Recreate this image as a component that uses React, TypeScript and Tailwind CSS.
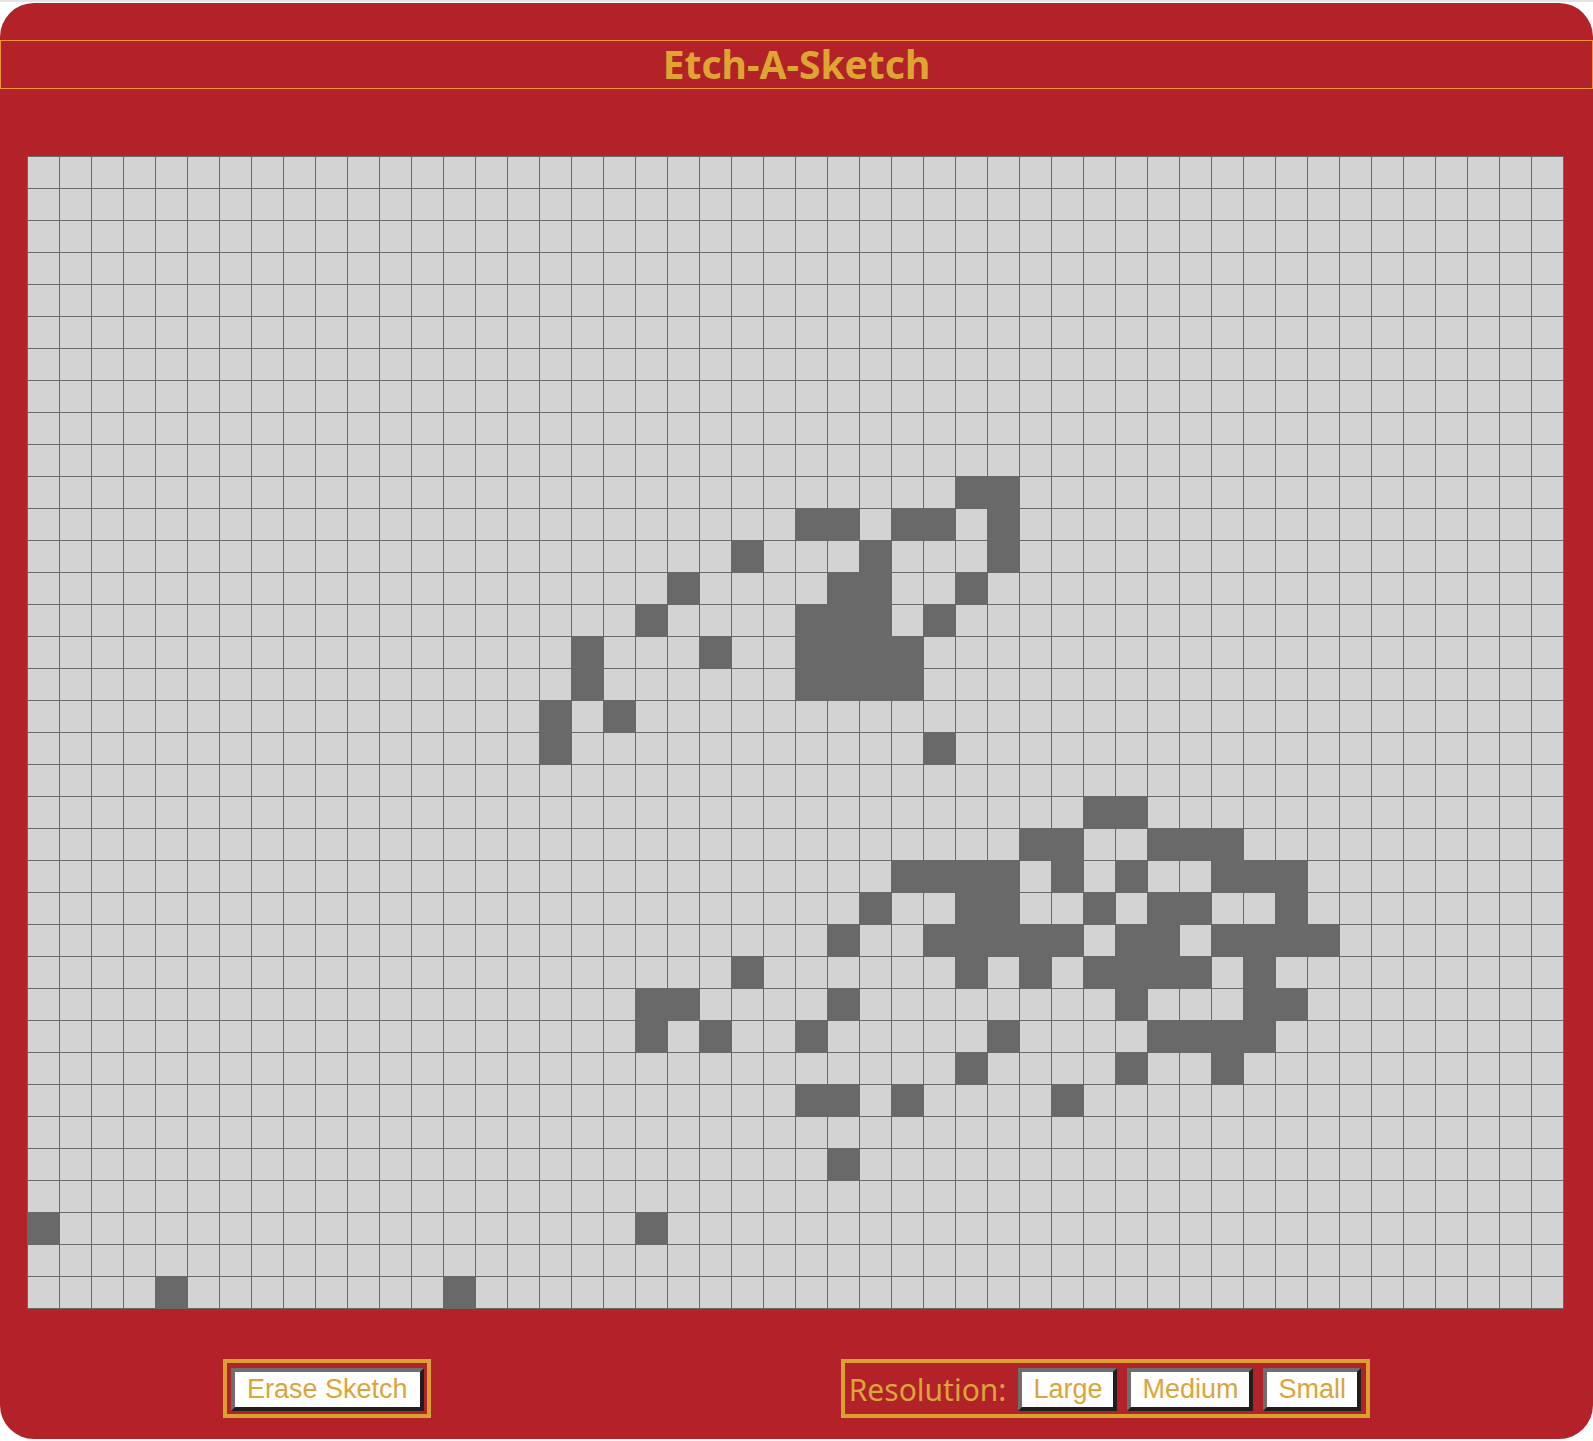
import React from "react";

const ROWS = 36;
const COLS = 48;

// cells that have been drawn on, by row
const drawn: Record<number, number[]> = {
  10: [29, 30],
  11: [24, 25, 27, 28, 30],
  12: [22, 26, 30],
  13: [20, 25, 26, 29],
  14: [19, 24, 25, 26, 28],
  15: [17, 21, 24, 25, 26, 27],
  16: [17, 24, 25, 26, 27],
  17: [16, 18],
  18: [16, 28],
  20: [33, 34],
  21: [31, 32, 35, 36, 37],
  22: [27, 28, 29, 30, 32, 34, 37, 38, 39],
  23: [26, 29, 30, 33, 35, 36, 39],
  24: [25, 28, 29, 30, 31, 32, 34, 35, 37, 38, 39, 40],
  25: [22, 29, 31, 33, 34, 35, 36, 38],
  26: [19, 20, 25, 34, 38, 39],
  27: [19, 21, 24, 30, 35, 36, 37, 38],
  28: [29, 34, 37],
  29: [24, 25, 27, 32],
  31: [25],
  33: [0, 19],
  35: [4, 13],
};

function SketchButton({ label, wide }: { label: string; wide?: boolean }) {
  return (
    <button
      className={`h-[43px] bg-white border-4 border-t-[#6e6e6e] border-l-[#6e6e6e] border-b-[#1f1f1f] border-r-[#1f1f1f] text-[27px] leading-none text-[#dca43a] ${
        wide ? "px-[12px]" : "px-[11px]"
      }`}
      style={{ fontFamily: '"Liberation Sans", Arial, sans-serif' }}
    >
      {label}
    </button>
  );
}

export default function App() {
  const cells = [];
  for (let r = 0; r < ROWS; r++) {
    const row = drawn[r] || [];
    for (let c = 0; c < COLS; c++) {
      cells.push(
        <div
          key={r + "-" + c}
          className={row.includes(c) ? "bg-[#696969]" : "bg-[#d3d3d3]"}
        />
      );
    }
  }

  return (
    <div className="min-h-screen bg-white">
      <div className="h-[2px] bg-[#e4e4e4]" />
      <div className="mt-px rounded-[34px] bg-[#b22228] pt-[37px] pb-[21px]">
        <h1
          className="h-[49px] flex items-center justify-center border border-[#f0913b] text-[39px] font-bold text-[#dea532]"
          style={{ fontFamily: '"Noto Sans", sans-serif' }}
        >
          Etch-A-Sketch
        </h1>

        <div className="mt-[67px] ml-[27px] w-fit grid grid-cols-[repeat(48,31px)] auto-rows-[31px] gap-px p-px bg-[#696969]">
          {cells}
        </div>

        <div className="mt-[50px] flex justify-between items-start px-[223px]">
          <div className="border-4 border-[#daa030] pl-[4px] pr-[3px] pt-[5px] pb-[3px]">
            <SketchButton label="Erase Sketch" wide />
          </div>
          <div className="flex items-center gap-[10px] border-4 border-[#daa030] pl-[4px] pr-[5px] pt-[5px] pb-[3px]">
            <span
              className="mr-[2px] text-[30px] leading-none text-[#dca43a]"
              style={{ fontFamily: '"Noto Sans", sans-serif' }}
            >
              Resolution:
            </span>
            <SketchButton label="Large" />
            <SketchButton label="Medium" />
            <SketchButton label="Small" />
          </div>
        </div>
      </div>
    </div>
  );
}
